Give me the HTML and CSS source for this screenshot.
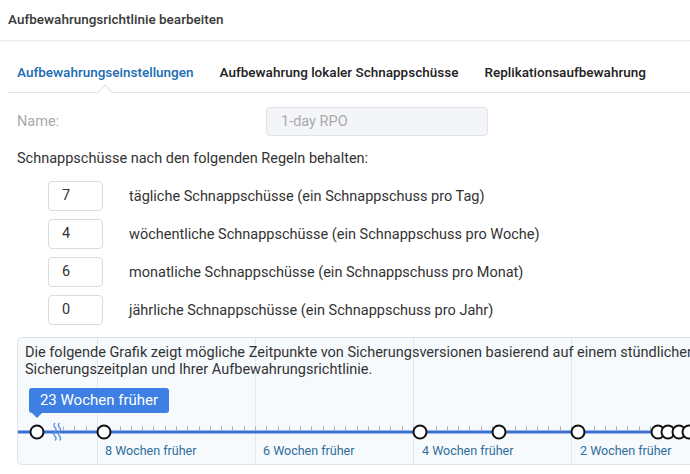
FILE: index.html
```html
<!DOCTYPE html>
<html lang="de">
<head>
<meta charset="utf-8">
<title>Aufbewahrungsrichtlinie bearbeiten</title>
<link rel="stylesheet" href="styles.css">
</head>
<body>
<header class="header">Aufbewahrungsrichtlinie bearbeiten</header>
<main class="main">
  <nav class="tabs">
    <div class="tab active">Aufbewahrungseinstellungen<span class="caret"></span></div>
    <div class="tab">Aufbewahrung lokaler Schnappschüsse</div>
    <div class="tab">Replikationsaufbewahrung</div>
  </nav>
  <section class="content">
    <div class="name-row">
      <label class="name-label">Name:</label>
      <div class="name-input">1-day RPO</div>
    </div>
    <p class="intro">Schnappschüsse nach den folgenden Regeln behalten:</p>
    <div class="rules">
      <div class="rule"><div class="num">7</div><span>tägliche Schnappschüsse (ein Schnappschuss pro Tag)</span></div>
      <div class="rule"><div class="num">4</div><span>wöchentliche Schnappschüsse (ein Schnappschuss pro Woche)</span></div>
      <div class="rule"><div class="num">6</div><span>monatliche Schnappschüsse (ein Schnappschuss pro Monat)</span></div>
      <div class="rule"><div class="num">0</div><span>jährliche Schnappschüsse (ein Schnappschuss pro Jahr)</span></div>
    </div>
    <div class="chart">
      <svg class="timeline" width="720" height="126" viewBox="0 0 720 126">
        <g class="grid" stroke="#dde8f1" stroke-width="1">
          <line x1="79.5" y1="0" x2="79.5" y2="126"/>
          <line x1="237.5" y1="0" x2="237.5" y2="126"/>
          <line x1="395.5" y1="0" x2="395.5" y2="126"/>
          <line x1="553.5" y1="0" x2="553.5" y2="126"/>
        </g>
        <line x1="0" y1="94" x2="720" y2="94" stroke="#3b6fd4" stroke-width="3"/>
        <g id="ticks" stroke="#a4adb6" stroke-width="1"></g>
        <g stroke="#5b93dc" stroke-width="1.4" fill="none">
          <path d="M37 85 q-2.2 2.2 0 4.4 q2.2 2.2 0 4.4 q-2.2 2.2 0 4.4 q2.2 2.2 0 4.4"/>
          <path d="M41.5 85 q-2.2 2.2 0 4.4 q2.2 2.2 0 4.4 q-2.2 2.2 0 4.4 q2.2 2.2 0 4.4"/>
        </g>
        <g fill="#fff" stroke="#111" stroke-width="2">
          <circle cx="19" cy="94" r="6.5"/>
          <circle cx="86" cy="94" r="6.5"/>
          <circle cx="402" cy="94" r="6.5"/>
          <circle cx="481" cy="94" r="6.5"/>
          <circle cx="560" cy="94" r="6.5"/>
          <circle cx="640" cy="94" r="6.5"/>
          <circle cx="650" cy="94" r="6.5"/>
          <circle cx="661" cy="94" r="6.5"/>
          <circle cx="671" cy="94" r="6.5"/>
        </g>
        <g class="axis-labels">
          <text x="87" y="117">8 Wochen früher</text>
          <text x="245" y="117">6 Wochen früher</text>
          <text x="404" y="117">4 Wochen früher</text>
          <text x="562" y="117">2 Wochen früher</text>
        </g>
      </svg>
      <p class="chart-text">Die folgende Grafik zeigt mögliche Zeitpunkte von Sicherungsversionen basierend auf einem stündlichen<br>Sicherungszeitplan und Ihrer Aufbewahrungsrichtlinie.</p>
      <div class="tooltip">23 Wochen früher</div>
    </div>
  </section>
</main>
<script>
  // daily tick marks, aligned to the two-week grid lines
  (function () {
    var g = document.getElementById('ticks');
    var step = 158 / 14;
    for (var k = -3; k < 60; k++) {
      var x = Math.round(79 + k * step) + 0.5;
      var l = document.createElementNS('http://www.w3.org/2000/svg', 'line');
      l.setAttribute('x1', x); l.setAttribute('x2', x);
      l.setAttribute('y1', 88.5); l.setAttribute('y2', 93);
      g.appendChild(l);
    }
  })();
</script>
</body>
</html>
```
FILE: styles.css
```css
html, body {
  margin: 0;
  overflow: hidden;
  background: #fff;
}

body {
  font-family: Roboto, "Liberation Sans", sans-serif;
  color: #333;
  font-size: 14px;
}

.header {
  height: 40px;
  line-height: 38px;
  padding-left: 8px;
  font-family: "Roboto Medium", Roboto, "Liberation Sans", sans-serif;
  font-size: 13.5px;
  font-weight: 500;
  color: #3a3a3a;
  border-bottom: 1px solid #ececec;
  box-shadow: 0 1px 2px rgba(0, 0, 0, 0.03);
}

.main {
  padding-left: 8px;
}

.tabs {
  display: flex;
  margin-top: 11px;
  border-bottom: 1px solid #e3e3e3;
}

.tab {
  position: relative;
  line-height: 40px;
  padding: 0 13px;
  font-family: "Roboto Medium", Roboto, "Liberation Sans", sans-serif;
  font-size: 13.5px;
  font-weight: 500;
  color: #222;
  white-space: nowrap;
}

.tab:first-child {
  padding-left: 9px;
}

.tab.active {
  color: #1c6db3;
}

.caret {
  position: absolute;
  left: 50%;
  bottom: -7px;
  width: 11px;
  height: 11px;
  margin-left: -8px;
  background: #fff;
  border-top: 1px solid #e3e3e3;
  border-left: 1px solid #e3e3e3;
  transform: rotate(45deg);
}

.content {
  padding-left: 9px;
}

.name-row {
  display: flex;
  align-items: center;
  margin-top: 14px;
  height: 29px;
}

.name-label {
  width: 249px;
  color: #aaa;
  font-size: 14.5px;
}

.name-input {
  box-sizing: border-box;
  width: 222px;
  height: 29px;
  line-height: 27px;
  padding-left: 14px;
  background: #f3f5f8;
  border: 1px solid #dfe3e8;
  border-radius: 4px;
  color: #aaa;
  font-size: 14.5px;
}

.intro {
  margin: 13px 0 0;
  line-height: 20px;
  font-size: 14.5px;
}

.rules {
  display: flex;
  flex-direction: column;
  gap: 8px;
  margin-top: 12px;
}

.rule {
  display: flex;
  align-items: center;
  height: 30px;
  font-size: 14.5px;
}

.num {
  box-sizing: border-box;
  width: 55px;
  height: 30px;
  line-height: 28px;
  margin-left: 31px;
  margin-right: 26px;
  padding-left: 13px;
  border: 1px solid #dcdcdc;
  border-radius: 4px;
}

.chart {
  position: relative;
  margin-top: 12px;
  width: 720px;
  height: 126px;
  border: 1px solid #dfe3e7;
  border-radius: 5px;
  background: #f6fafd;
}

.timeline {
  position: absolute;
  left: 0;
  top: 0;
}

.axis-labels text {
  font-family: Roboto, "Liberation Sans", sans-serif;
  font-size: 12.5px;
  fill: #2f6d9c;
}

.chart-text {
  position: relative;
  margin: 0;
  padding: 7px 0 0 7px;
  line-height: 16.5px;
  font-size: 14.5px;
  color: #333;
  white-space: nowrap;
}

.tooltip {
  position: absolute;
  left: 11px;
  top: 50px;
  width: 140px;
  height: 25px;
  line-height: 25px;
  text-align: center;
  background: #3d7fe3;
  color: #fff;
  font-size: 15px;
  border-radius: 3px;
}

.tooltip::after {
  content: "";
  position: absolute;
  left: 3px;
  bottom: -5px;
  border-left: 5px solid transparent;
  border-right: 5px solid transparent;
  border-top: 5px solid #3d7fe3;
}
```
